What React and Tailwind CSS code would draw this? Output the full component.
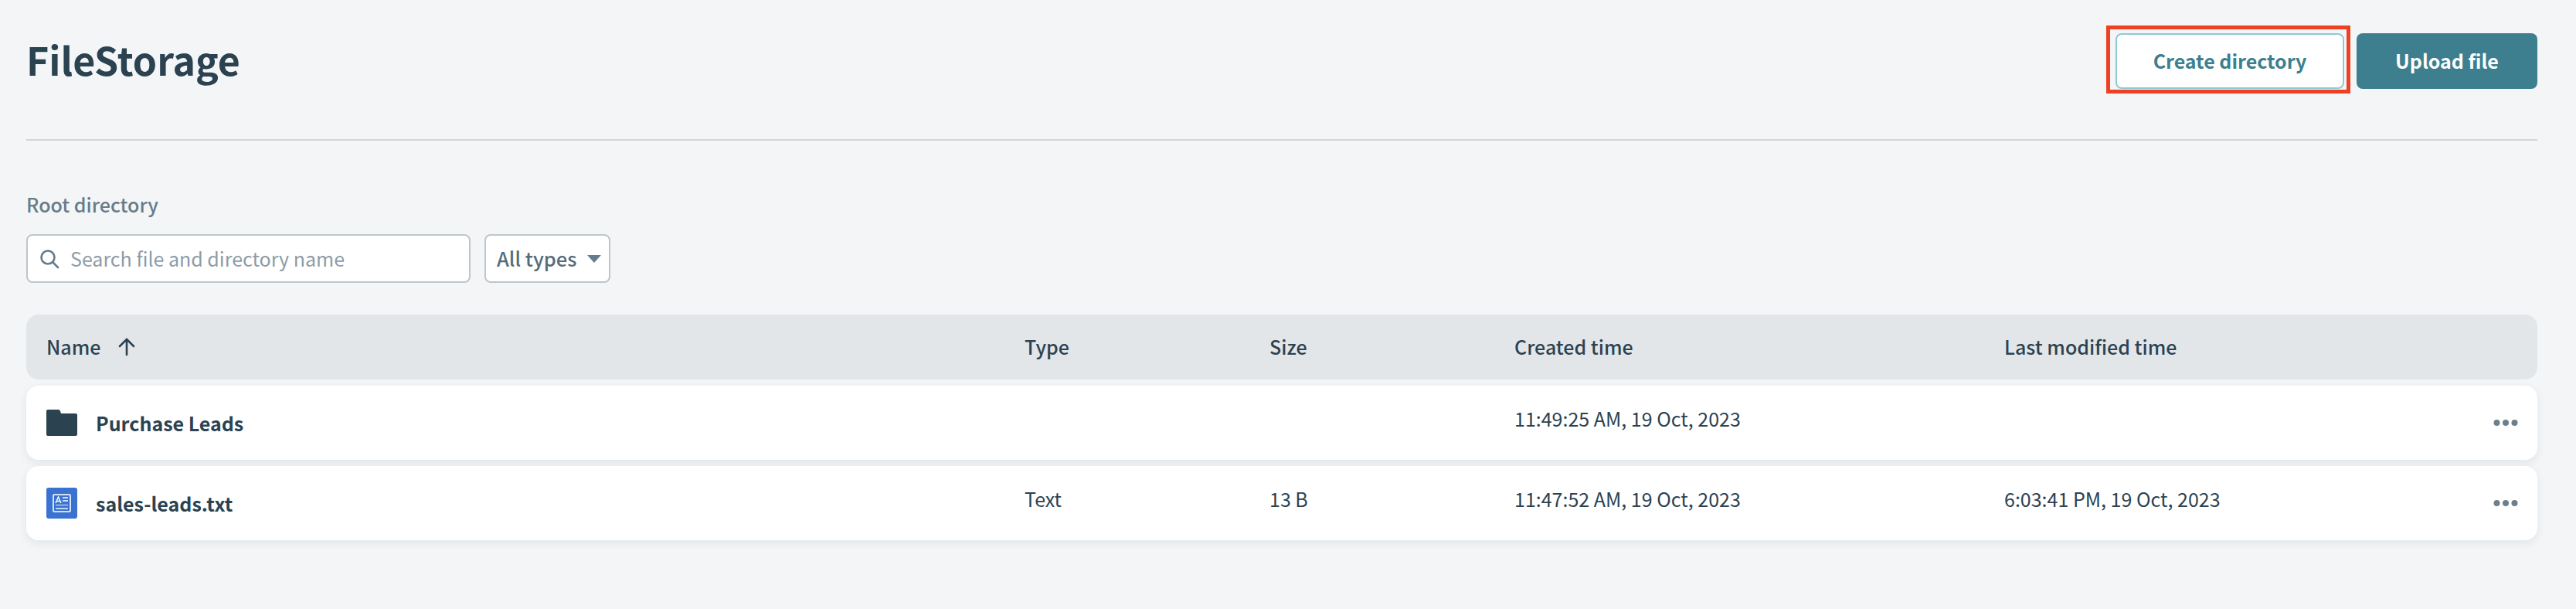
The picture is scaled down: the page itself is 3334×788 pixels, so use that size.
const font = { fontFamily: '"Noto Sans CJK JP", "Noto Sans", sans-serif' };

const grid = "grid grid-cols-[1266px_317px_317px_634px_1fr] items-center pl-[26px] pr-[25px]";

function FolderIcon() {
  return (
    <svg width="40" height="34" viewBox="0 0 40 34" className="shrink-0">
      <path d="M2 0h13c1.5 0 2.4.6 3 2l1 3h19c1.2 0 2 .8 2 2v25c0 1.2-.8 2-2 2H2c-1.2 0-2-.8-2-2V2C0 .8.8 0 2 0z" fill="#2b4251" />
    </svg>
  );
}

function FileIcon() {
  return (
    <svg width="40" height="40" viewBox="0 0 40 40" className="shrink-0">
      <rect width="40" height="40" rx="3" fill="#3a72d2" />
      <rect x="9" y="9" width="22" height="22" rx="1" fill="none" stroke="#fff" strokeWidth="1.6" />
      <path d="M12 20l3.5-8 3.5 8M13.2 17.5h4.6" fill="none" stroke="#fff" strokeWidth="1.4" />
      <path d="M21 13h7M21 17h7" stroke="#fff" strokeWidth="1.4" />
      <path d="M12 22.5h16" stroke="#b9cff2" strokeWidth="1.4" />
      <path d="M12 27h16" stroke="#fff" strokeWidth="1.4" />
    </svg>
  );
}

function Dots() {
  return (
    <svg width="32" height="10" viewBox="0 0 32 10" className="justify-self-end">
      <circle cx="4.5" cy="5" r="4" fill="#6c7f8c" />
      <circle cx="16" cy="5" r="4" fill="#6c7f8c" />
      <circle cx="27.5" cy="5" r="4" fill="#6c7f8c" />
    </svg>
  );
}

function Row({ icon, name, type, size, created, modified }) {
  return (
    <div className={`${grid} h-[96px] rounded-2xl bg-white shadow-[0_4px_12px_rgba(42,63,79,0.08)]`}>
      <div className="flex items-center gap-[24px]">
        <span className="flex w-[40px] justify-center">{icon}</span>
        <span className="text-[25px] font-semibold leading-none">{name}</span>
      </div>
      <span className="-translate-y-[5px] text-[25px]">{type}</span>
      <span className="-translate-y-[5px] text-[25px]">{size}</span>
      <span className="-translate-y-[5px] text-[25px]">{created}</span>
      <div className="flex items-center justify-between">
        <span className="-translate-y-[5px] text-[25px]">{modified}</span>
        <Dots />
      </div>
    </div>
  );
}

export default function App() {
  return (
    <div style={font} className="min-h-[788px] bg-[#f3f5f7] pl-[34px] pr-[50px] text-[#2b4251]">
      <header className="flex h-[182px] items-start justify-between border-b-2 border-[#d0d6dc]">
        <h1 className="mt-[40px] text-[50px] font-bold leading-[72px]">FileStorage</h1>
        <div className="mt-[43px] flex gap-[16px]">
          <div className="relative">
            <button className="h-[72px] w-[296px] rounded-lg border-2 border-[#8ccbd3] bg-white text-[25px] font-semibold text-[#3d7f8f]">
              Create directory
            </button>
            <div className="pointer-events-none absolute -bottom-[6px] -left-[12px] -right-[8px] -top-[10px] border-[5px] border-[#ee4124]" />
          </div>
          <button className="h-[72px] w-[234px] rounded-lg bg-[#3d7f8f] text-[25px] font-semibold text-white">
            Upload file
          </button>
        </div>
      </header>

      <p className="mt-[66px] text-[25px] font-medium leading-[32px] text-[#667c8a]">Root directory</p>

      <div className="mt-[23px] flex gap-[18px]">
        <label className="flex h-[63px] w-[575px] items-center gap-[14px] rounded-lg border-2 border-[#bcc6ce] bg-white pl-[15px]">
          <svg width="26" height="26" viewBox="0 0 26 26" fill="none" stroke="#667c8a" strokeWidth="2.6" strokeLinecap="round">
            <circle cx="11" cy="11" r="8.5" />
            <path d="M17.5 17.5L24 24" />
          </svg>
          <span className="text-[25px] text-[#8d9ca7]">Search file and directory name</span>
        </label>
        <div className="flex h-[63px] w-[163px] items-center gap-[13px] rounded-lg border-2 border-[#bcc6ce] bg-white pl-[14px]">
          <span className="text-[25.5px] font-medium text-[#566c7a]">All types</span>
          <svg width="18" height="10" viewBox="0 0 18 10"><path d="M0 0h18l-9 10z" fill="#667c8a" /></svg>
        </div>
      </div>

      <div className="mt-[41px] flex flex-col gap-[8px]">
        <div className={`${grid} h-[84px] rounded-2xl bg-[#e3e6e9] text-[25px] font-medium`}>
          <div className="flex items-center gap-[22px]">
            <span>Name</span>
            <svg width="24" height="24" viewBox="0 0 24 24" fill="none" stroke="#2b4251" strokeWidth="2.6" strokeLinecap="round" strokeLinejoin="round">
              <path d="M12 22V3M3 11l9-9 9 9" />
            </svg>
          </div>
          <span>Type</span>
          <span>Size</span>
          <span>Created time</span>
          <span>Last modified time</span>
        </div>
        <Row icon={<FolderIcon />} name="Purchase Leads" created="11:49:25 AM, 19 Oct, 2023" />
        <Row icon={<FileIcon />} name="sales-leads.txt" type="Text" size="13 B" created="11:47:52 AM, 19 Oct, 2023" modified="6:03:41 PM, 19 Oct, 2023" />
      </div>
    </div>
  );
}
